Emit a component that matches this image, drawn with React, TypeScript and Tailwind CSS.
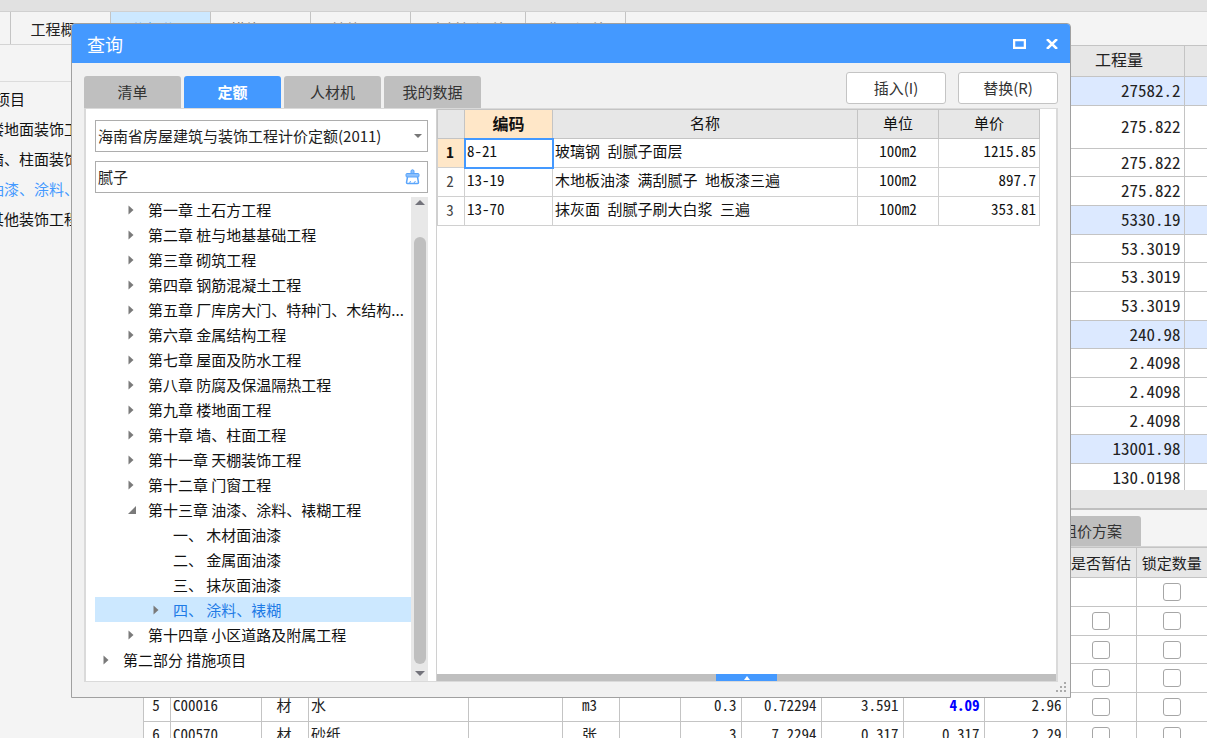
import { useState } from "react";

const UI_FONT = "font-['Noto_Sans_CJK_SC','Liberation_Sans',sans-serif]";
// half-width latin glyphs keep the grid numbers in even columns
const GRID_TEXT = "[font-feature-settings:'hwid']";

const mainTabs = [
  { label: "工程概况", width: "w-[100px]", color: "text-[#222]" },
  { label: "分部分项", width: "w-[100px]", color: "bg-[#cce8ff] text-[#4499ff]" },
  { label: "措施项目", width: "w-[100px]", color: "text-[#777]" },
  { label: "其他项目", width: "w-[100px]", color: "text-[#777]" },
  { label: "人材机汇总", width: "w-[115px]", color: "text-[#777]" },
  { label: "费用汇总", width: "w-[100px]", color: "text-[#777]" },
];

const sections = [
  { label: "楼地面装饰工程" },
  { label: "墙、柱面装饰工程" },
  { label: "油漆、涂料、裱糊工程", active: true },
  { label: "其他装饰工程" },
];

const quantities = [
  { value: "27582.2", group: true },
  { value: "275.822", tall: true },
  { value: "275.822" },
  { value: "275.822" },
  { value: "5330.19", group: true },
  { value: "53.3019" },
  { value: "53.3019" },
  { value: "53.3019" },
  { value: "240.98", group: true },
  { value: "2.4098" },
  { value: "2.4098" },
  { value: "2.4098" },
  { value: "13001.98", group: true },
  { value: "130.0198" },
];

const materials = [
  { id: 1, estimate: false },
  { id: 2, estimate: true },
  { id: 3, estimate: true },
  { id: 4, estimate: true },
  { id: 5, no: "5", estimate: true, code: "C00016", kind: "材", name: "水", unit: "m3", rate: "0.3", amount: "0.72294", price: "3.591", market: "4.09", changed: true, total: "2.96" },
  { id: 6, no: "6", estimate: true, code: "C00570", kind: "材", name: "砂纸", unit: "张", rate: "3", amount: "7.2294", price: "0.317", market: "0.317", total: "2.29" },
];

const tree = [
  { level: 1, label: "第一章 土石方工程", state: "closed" },
  { level: 1, label: "第二章 桩与地基基础工程", state: "closed" },
  { level: 1, label: "第三章 砌筑工程", state: "closed" },
  { level: 1, label: "第四章 钢筋混凝土工程", state: "closed" },
  { level: 1, label: "第五章 厂库房大门、特种门、木结构...", state: "closed" },
  { level: 1, label: "第六章 金属结构工程", state: "closed" },
  { level: 1, label: "第七章 屋面及防水工程", state: "closed" },
  { level: 1, label: "第八章 防腐及保温隔热工程", state: "closed" },
  { level: 1, label: "第九章 楼地面工程", state: "closed" },
  { level: 1, label: "第十章 墙、柱面工程", state: "closed" },
  { level: 1, label: "第十一章 天棚装饰工程", state: "closed" },
  { level: 1, label: "第十二章 门窗工程", state: "closed" },
  { level: 1, label: "第十三章 油漆、涂料、裱糊工程", state: "open" },
  { level: 2, label: "一、 木材面油漆", state: "leaf" },
  { level: 2, label: "二、 金属面油漆", state: "leaf" },
  { level: 2, label: "三、 抹灰面油漆", state: "leaf" },
  { level: 2, label: "四、 涂料、裱糊", state: "closed" },
  { level: 1, label: "第十四章 小区道路及附属工程", state: "closed" },
  { level: 0, label: "第二部分 措施项目", state: "closed" },
];

const indents = ["pl-2", "pl-[33px]", "pl-[58px]"];

const results = [
  { code: "8-21", name: "玻璃钢 刮腻子面层", unit: "100m2", price: "1215.85" },
  { code: "13-19", name: "木地板油漆 满刮腻子 地板漆三遍", unit: "100m2", price: "897.7" },
  { code: "13-70", name: "抹灰面 刮腻子刷大白浆 三遍", unit: "100m2", price: "353.81" },
];

function MainTabs() {
  return (
    <nav className="flex h-8 shrink-0 pl-[10px]">
      {mainTabs.map((tab) => (
        <button
          key={tab.label}
          className={`${tab.width} ${tab.color} shrink-0 border-l border-[#c4c4c4] pt-0.5 text-[15px] leading-5`}
        >
          {tab.label}
        </button>
      ))}
      <div className="border-l border-[#c4c4c4]" />
    </nav>
  );
}

function Sidebar() {
  return (
    <aside className="w-[143px] shrink-0 overflow-hidden border-t border-[#d4d4d4]">
      <div className="h-[37px] border-b border-[#dcdcdc]" />
      <ul className="-ml-[35px] pt-[2px] text-[15px] leading-[30px] whitespace-nowrap text-[#111]">
        <li>整个项目</li>
        {sections.map((s) => (
          <li key={s.label} className={`pl-6 ${s.active ? "text-[#4499ff]" : ""}`}>
            {s.label}
          </li>
        ))}
      </ul>
    </aside>
  );
}

function QuantityGrid() {
  return (
    <div className="min-h-0 flex-1 overflow-hidden bg-white">
      <table className="w-full table-fixed border-collapse border-t border-[#bdbdbd] text-[#222] [&_tr>*:last-child]:border-r-0">
        <colgroup>
          <col />
          <col className="w-[130px]" />
          <col className="w-[23px]" />
        </colgroup>
        <thead>
          <tr className="h-[31px] bg-[#e7e7e7] text-base leading-5">
            <th className="border border-[#c4c4c4]" />
            <th className="border border-[#c4c4c4] pb-1 font-normal">工程量</th>
            <th className="border border-[#c4c4c4]" />
          </tr>
        </thead>
        <tbody className="[&>tr:nth-child(3n)]:h-7">
          {quantities.map((q, i) => (
            <tr key={i} className={`${q.tall ? "h-[43px]" : "h-[29px]"} ${q.group ? "bg-[#dce9ff]" : "bg-white"}`}>
              <td className="border border-[#c4c4c4]" />
              <td className={`border border-[#c4c4c4] pr-[3px] pb-0.5 text-right text-[17px] leading-5 ${GRID_TEXT}`}>{q.value}</td>
              <td className="border border-[#c4c4c4]" />
            </tr>
          ))}
        </tbody>
      </table>
    </div>
  );
}

function CheckCell({ label, show }: { label: string; show: boolean }) {
  return (
    <td className="border border-[#c4c4c4] text-center">
      {show && (
        <input
          type="checkbox"
          aria-label={label}
          className="mx-auto block size-[18px] appearance-none rounded-[3px] border border-[#a6a6a6] bg-white checked:bg-[#4499ff]"
        />
      )}
    </td>
  );
}

function MaterialGrid() {
  const cell = "border border-[#c4c4c4] pl-0.5 pb-1";
  const num = "border border-[#c4c4c4] pr-1 pb-1 text-right";
  return (
    <div className="h-[230px] shrink-0 overflow-hidden border-t-2 border-[#bfbfbf]">
      {/* Detail tabs */}
      <div className="flex h-[37px] items-end justify-end border-b border-[#d4d4d4] pr-[66px]">
        <button className="h-[30px] w-[98px] rounded-t-[3px] bg-[#bfbfbf] text-[15px] leading-5 text-[#333]">组价方案</button>
      </div>
      <table
        className={`w-full table-fixed border-collapse bg-white text-[15px] leading-5 text-[#222] [&_tr>*:last-child]:border-r-0 ${GRID_TEXT}`}
      >
        <colgroup>
          <col className="w-[27px]" />
          <col className="w-[91px]" />
          <col className="w-[47px]" />
          <col />
          <col className="w-[94px]" />
          <col className="w-[57px]" />
          <col className="w-[61px]" />
          <col className="w-[61px]" />
          <col className="w-[80px]" />
          <col className="w-[82px]" />
          <col className="w-[81px]" />
          <col className="w-[82px]" />
          <col className="w-[70px]" />
          <col className="w-[71px]" />
        </colgroup>
        <thead>
          <tr className="h-[30px] bg-[#e7e7e7]">
            <th className={cell} colSpan={12} />
            <th className="border border-[#c4c4c4] font-normal whitespace-nowrap">是否暂估</th>
            <th className="border border-[#c4c4c4] font-normal whitespace-nowrap">锁定数量</th>
          </tr>
        </thead>
        <tbody className="[&>tr:nth-child(3n)]:h-7">
          {materials.map((m) => (
            <tr key={m.id} className="h-[29px]">
              <td className="border border-[#c4c4c4] pr-0.5 pb-1 text-center">{m.no}</td>
              <td className={cell}>{m.code}</td>
              <td className="border border-[#c4c4c4] pr-0.5 pb-1 text-center">{m.kind}</td>
              <td className={cell}>{m.name}</td>
              <td className={cell} />
              <td className="border border-[#c4c4c4] pr-0.5 pb-1 text-center">{m.unit}</td>
              <td className={cell} />
              <td className={num}>{m.rate}</td>
              <td className={num}>{m.amount}</td>
              <td className={num}>{m.price}</td>
              <td className={`${num} ${m.changed ? "font-bold text-[#0000ff]" : ""}`}>{m.market}</td>
              <td className={num}>{m.total}</td>
              <CheckCell label={`是否暂估 ${m.id}`} show={m.estimate} />
              <CheckCell label={`锁定数量 ${m.id}`} show />
            </tr>
          ))}
        </tbody>
      </table>
    </div>
  );
}

function TreeArrow({ state }: { state: string }) {
  return (
    <svg viewBox="0 0 10 10" className="size-[10px] shrink-0 fill-[#7a7a7a]">
      {state === "closed" && <path d="M0.500 0.500 5.500 5 0.500 9.500Z" />}
      {state === "open" && <path d="M8 1V9H0Z" />}
    </svg>
  );
}

function ChapterTree() {
  const [selected, setSelected] = useState("四、 涂料、裱糊");
  return (
    <div className="mt-1 flex min-h-0 flex-1">
      <ul className="min-w-0 flex-1 text-[15px] leading-[25px] text-[#111]">
        {tree.map((node) => (
          <li key={node.label}>
            <button
              onClick={() => setSelected(node.label)}
              className={`flex h-[25px] w-full items-center gap-[10px] whitespace-nowrap ${indents[node.level]} ${
                selected === node.label ? "bg-[#cce8ff] text-[#1e7be6]" : ""
              }`}
            >
              <TreeArrow state={node.state} />
              {node.label}
            </button>
          </li>
        ))}
      </ul>

      {/* Scrollbar */}
      <div className="flex w-[17px] shrink-0 flex-col items-center bg-[#e8e8e8]">
        <svg viewBox="0 0 10 5" className="mt-[3px] h-[5px] w-[10px] fill-[#73737b]">
          <path d="M0 5 5 0 10 5Z" />
        </svg>
        <div className="mt-8 mb-[7px] w-3 flex-1 rounded-full bg-[#bfbfbf]" />
        <svg viewBox="0 0 10 5" className="mb-[5px] h-[5px] w-[10px] fill-[#73737b]">
          <path d="M0 0H10L5 5Z" />
        </svg>
      </div>
    </div>
  );
}

function FilterPane() {
  return (
    <div className="flex w-[350px] shrink-0 flex-col pt-[11px] pr-2 pl-[9px]">
      <div className="relative">
        <select
          aria-label="定额库"
          className="block h-8 w-full appearance-none border border-[#adadad] bg-white pl-[2px] text-[15px] leading-5 text-[#222]"
        >
          <option>海南省房屋建筑与装饰工程计价定额(2011)</option>
        </select>
        <svg viewBox="0 0 8 4" className="pointer-events-none absolute top-[14px] right-[6px] h-1 w-2 fill-[#777]">
          <path d="M0 0H8L4 4Z" />
        </svg>
      </div>

      <div className="mt-[9px] flex h-8 items-center border border-[#adadad] bg-white pr-[7px]">
        <input
          aria-label="搜索"
          defaultValue="腻子"
          className="min-w-0 flex-1 pl-[2px] text-[15px] leading-5 text-[#222] outline-none"
        />
        <button aria-label="清空">
          <svg viewBox="0 0 15 16" className="block h-4 w-[15px] fill-none stroke-[#5aa5fb]">
            <path d="M6 4.500V1.500Q7.500 0 9 1.500V4.500" fill="#8cc0fc" />
            <rect x="1" y="4.500" width="13" height="3.500" rx="1" fill="#8cc0fc" />
            <path d="M2.500 8 1.500 13.500Q1.500 14.500 2.500 14.500H12.500Q13.500 14.500 13.500 13.500L12.500 8" strokeWidth="1.500" />
            <path d="M4.500 14.500 5.500 12M8.500 14.500 10.500 12" />
          </svg>
        </button>
      </div>

      <ChapterTree />
    </div>
  );
}

function ResultPane() {
  const head = "border border-[#c4c4c4] pb-0.5 font-normal";
  const cell = "border border-[#d0d0d0] pb-1";
  return (
    <div className="flex min-w-0 flex-1 flex-col border-l border-[#d0d0d0]">
      <div className="flex-1 pr-4">
        <table className={`w-full table-fixed border-collapse text-[15px] leading-5 text-[#111] ${GRID_TEXT}`}>
          <colgroup>
            <col className="w-[27px]" />
            <col className="w-[88px]" />
            <col />
            <col className="w-[81px]" />
            <col className="w-[101px]" />
          </colgroup>
          <thead>
            <tr className="h-[29px] bg-[#e7e7e7]">
              <th className={head} />
              <th className="border border-[#c4c4c4] bg-[#ffe7c8] pb-0.5 text-base leading-5 font-bold">编码</th>
              <th className={head}>名称</th>
              <th className={head}>单位</th>
              <th className={head}>单价</th>
            </tr>
          </thead>
          <tbody>
            {results.map((r, i) => (
              <tr key={r.code} className="h-[29px]">
                <td className={`border border-[#d0d0d0] pr-0.5 pb-0.5 text-center ${i === 0 ? "bg-[#ffe7c8] font-bold" : "text-[#444]"}`}>{i + 1}</td>
                <td className={`${cell} pl-0.5 ${i === 0 ? "outline-2 -outline-offset-1 outline-[#4499ff]" : ""}`}>{r.code}</td>
                <td className={`${cell} pl-0.5`}>{r.name}</td>
                <td className={`${cell} text-center`}>{r.unit}</td>
                <td className={`${cell} pr-[3px] text-right`}>{r.price}</td>
              </tr>
            ))}
          </tbody>
        </table>
      </div>

      {/* Collapsed detail drawer */}
      <div className="flex h-[7px] shrink-0 justify-center bg-[#bfbfbf]">
        <button aria-label="展开" className="flex w-[61px] items-center justify-center bg-[#4499ff]">
          <svg viewBox="0 0 6 4" className="h-1 w-[6px] fill-white">
            <path d="M0 4 3 0 6 4Z" />
          </svg>
        </button>
      </div>
    </div>
  );
}

function QueryDialog() {
  const [tab, setTab] = useState("定额");
  return (
    <div
      role="dialog"
      aria-label="查询"
      className="absolute top-[23px] right-[136px] bottom-10 left-[71px] flex flex-col overflow-hidden rounded-t-[4px] border border-[#a0a0a0] bg-[#f1f1f1]"
    >
      {/* Title bar */}
      <header className="flex h-[39px] shrink-0 items-center bg-[#4499ff] pr-3 pl-[15px] text-white">
        <h1 className="flex-1 text-lg leading-6">查询</h1>
        <button aria-label="最大化" className="mr-5">
          <svg viewBox="0 0 13 10" className="h-[10px] w-[13px] fill-none stroke-white">
            <rect x="1" y="1" width="11" height="8" strokeWidth="2.500" />
          </svg>
        </button>
        <button aria-label="关闭">
          <svg viewBox="0 0 12 10" className="h-[10px] w-3 fill-none stroke-white">
            <path d="M1 0 11 10M11 0 1 10" strokeWidth="2.500" />
          </svg>
        </button>
      </header>

      {/* Tabs and actions */}
      <div className="flex h-[45px] shrink-0 items-end px-3">
        <div className="flex flex-1 gap-[3px]">
          {["清单", "定额", "人材机", "我的数据"].map((name) => (
            <button
              key={name}
              onClick={() => setTab(name)}
              className={`h-8 w-[97px] rounded-t-[3px] text-[15px] leading-5 ${
                tab === name ? "bg-[#4499ff] font-bold text-white" : "bg-[#bfbfbf] text-[#333]"
              }`}
            >
              {name}
            </button>
          ))}
        </div>
        <div className="mb-1 flex gap-3 text-[15px] leading-5 text-[#333]">
          <button className="h-8 w-[100px] rounded-[3px] border border-[#c4c4c4] bg-white">插入(I)</button>
          <button className="h-8 w-[100px] rounded-[3px] border border-[#c4c4c4] bg-white">替换(R)</button>
        </div>
      </div>

      <div className="mx-3 flex min-h-0 flex-1 border-x-2 border-y border-[#dadada] bg-white">
        <FilterPane />
        <ResultPane />
      </div>

      <footer className="flex h-[15px] shrink-0 justify-end pr-1">
        <svg viewBox="0 0 10 10" className="size-[10px] fill-[#aaa]">
          <path d="M8 0h2v2h-2zM4 4h2v2h-2zM8 4h2v2h-2zM0 8h2v2h-2zM4 8h2v2h-2zM8 8h2v2h-2z" />
        </svg>
      </footer>
    </div>
  );
}

export default function App() {
  return (
    <div className={`relative flex h-screen flex-col overflow-hidden bg-[#f4f4f4] ${UI_FONT}`}>
      <div className="h-3 shrink-0 border-b border-[#d0d0d0] bg-[#e1e1e1]" />
      <MainTabs />
      <div className="flex min-h-0 flex-1">
        <Sidebar />
        <main className="flex min-w-0 flex-1 flex-col pt-px">
          <QuantityGrid />
          <div className="h-[18px] shrink-0 bg-[#e7e7e7]" />
          <MaterialGrid />
        </main>
      </div>
      <QueryDialog />
    </div>
  );
}
